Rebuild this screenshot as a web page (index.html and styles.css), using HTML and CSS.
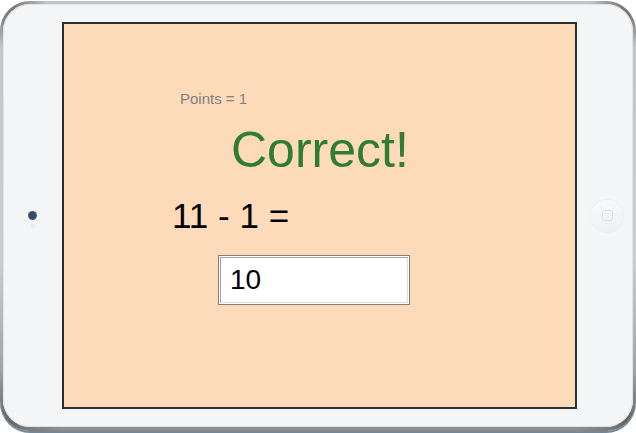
FILE: index.html
```html
<!DOCTYPE html>
<html>
<head>
<meta charset="utf-8">
<link rel="stylesheet" href="styles.css">
</head>
<body>
<div class="bezel">
  <div class="device">
    <div class="side side-left">
      <div class="camera"></div>
      <div class="sensor"></div>
    </div>
    <div class="screen">
      <div class="points">Points = 1</div>
      <div class="result">Correct!</div>
      <div class="question">11 - 1 =</div>
      <input class="answer" type="text" value="10" readonly>
    </div>
    <div class="side side-right">
      <div class="home"><div class="home-square"></div></div>
    </div>
  </div>
</div>
</body>
</html>
```
FILE: styles.css
```css
html, body {
  margin: 0;
  padding: 0;
  background: #ffffff;
  font-family: "Liberation Sans", Arial, sans-serif;
}
body {
  width: 636px;
  height: 433px;
  overflow: hidden;
  padding-top: 1px;
  box-sizing: border-box;
}
.bezel {
  box-sizing: border-box;
  width: 636px;
  height: 430px;
  padding: 3px 3px 4px 3px;
  border-radius: 30px;
  background:
    radial-gradient(circle at 0 0, #5c5c5c 0, #8a8a8a 22px, rgba(190,190,190,0) 46px),
    radial-gradient(circle at 100% 0, #5c5c5c 0, #8a8a8a 22px, rgba(190,190,190,0) 46px),
    radial-gradient(circle at 0 100%, #4a4a4a 0, #7a7a7a 24px, rgba(150,150,150,0) 60px),
    radial-gradient(circle at 100% 100%, #4a4a4a 0, #7a7a7a 24px, rgba(150,150,150,0) 60px),
    linear-gradient(to bottom, #c4c4c4 0, #cdcdcd 60%, #8d8d8d 100%);
  box-shadow: 0 2px 0 #71879a;
}
.device {
  box-sizing: border-box;
  width: 100%;
  height: 100%;
  border-radius: 27px;
  background: #f4f5f7;
  box-shadow: inset 0 0 0 1px #e2e3e5;
  display: flex;
  align-items: center;
}
.side {
  height: 100%;
  display: flex;
  flex-direction: column;
  align-items: center;
  justify-content: center;
}
.side-left {
  width: 59px;
  flex: none;
}
.side-right {
  width: 57px;
  flex: none;
  padding-left: 3px;
  box-sizing: border-box;
}
.camera {
  width: 9px;
  height: 9px;
  border-radius: 50%;
  background: radial-gradient(circle at 50% 50%, #1f4f8f 0 1.5px, #3c4148 2.6px, #5a5f66 4.5px);
  margin-top: 8px;
}
.sensor {
  width: 4px;
  height: 4px;
  border-radius: 50%;
  background: #e6e8eb;
  margin-top: 4px;
}
.home {
  width: 32px;
  height: 32px;
  border-radius: 50%;
  background: linear-gradient(160deg, #fafafb, #eeeff1);
  box-shadow: 0 0 0 1px #eceef0;
  display: flex;
  align-items: center;
  justify-content: center;
}
.home-square {
  width: 9px;
  height: 9px;
  border: 1px solid #dcdde0;
  border-radius: 3px;
}
.screen {
  box-sizing: border-box;
  flex: none;
  align-self: flex-start;
  margin-top: 18px;
  width: 515px;
  height: 387px;
  border: 2px solid #2e2e2e;
  background: #fddab9;
  padding-top: 67px;
}
.points {
  margin-left: 116px;
  font-size: 15px;
  line-height: 15px;
  color: #808080;
}
.result {
  margin-left: 167px;
  margin-top: 19px;
  font-size: 50px;
  line-height: 50px;
  color: #2f7d32;
}
.question {
  margin-left: 108px;
  margin-top: 23px;
  font-size: 35px;
  line-height: 35px;
  color: #000000;
}
.answer {
  display: block;
  box-sizing: border-box;
  margin: 22px 0 0 154px;
  width: 192px;
  height: 50px;
  border: 1px solid #7f7f7f;
  box-shadow: inset 0 0 0 1px #ffffff, inset 1px 1px 0 1px #a3a3a3, inset 0 0 0 2px #dedede;
  background: #ffffff;
  padding: 0 0 0 11px;
  font-family: "Liberation Sans", Arial, sans-serif;
  font-size: 28px;
  color: #000000;
  outline: none;
}
```
